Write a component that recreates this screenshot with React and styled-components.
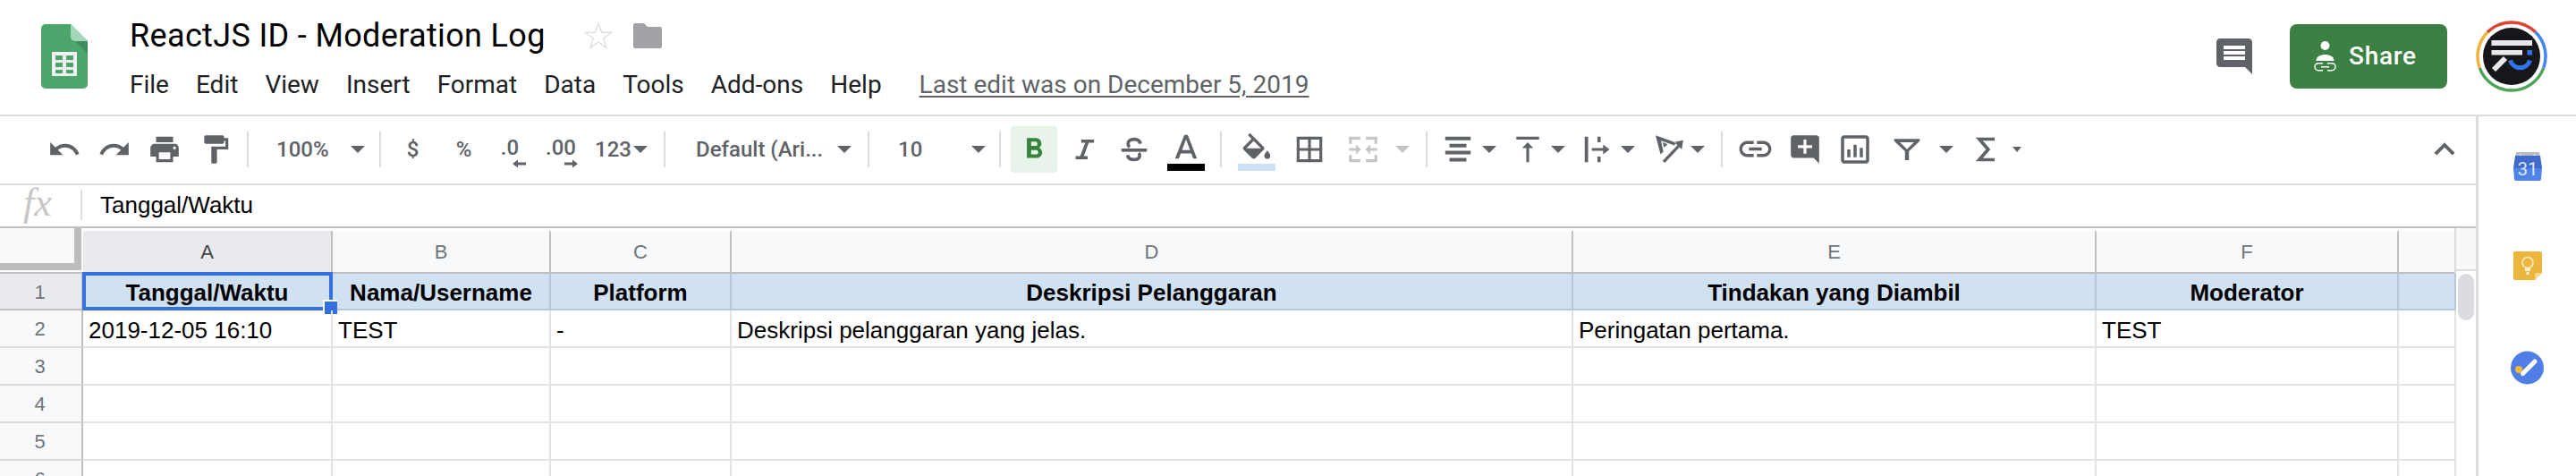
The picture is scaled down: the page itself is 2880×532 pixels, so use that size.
import React from "react";
import styled, { createGlobalStyle } from "styled-components";

const GlobalStyle = createGlobalStyle`
  html, body {
    margin: 0;
    padding: 0;
    background: #fff;
    overflow: hidden;
  }
  * {
    box-sizing: border-box;
  }
`;

const columns = [
  { letter: "A", width: 279, title: "Tanggal/Waktu", value: "2019-12-05 16:10", active: true },
  { letter: "B", width: 244, title: "Nama/Username", value: "TEST" },
  { letter: "C", width: 202, title: "Platform", value: "-" },
  { letter: "D", width: 941, title: "Deskripsi Pelanggaran", value: "Deskripsi pelanggaran yang jelas." },
  { letter: "E", width: 585, title: "Tindakan yang Diambil", value: "Peringatan pertama." },
  { letter: "F", width: 338, title: "Moderator", value: "TEST" },
  { letter: "", width: 64, title: "", value: "" },
];

const menus = ["File", "Edit", "View", "Insert", "Format", "Data", "Tools", "Add-ons", "Help"];

const Icon = ({ d, size = 38, color = "#5f6368", box = "0 0 24 24" }) => (
  <svg width={size} height={size} viewBox={box} fill={color} fillRule="evenodd">
    <path d={d} />
  </svg>
);

const icons = {
  undo: "M12.5 8c-2.65 0-5.05.99-6.9 2.6L2 7v9h9l-3.62-3.62c1.39-1.16 3.16-1.88 5.12-1.88 3.54 0 6.55 2.31 7.6 5.5l2.37-.78C21.08 11.03 17.15 8 12.5 8z",
  redo: "M18.4 10.6C16.55 8.99 14.15 8 11.5 8c-4.65 0-8.58 3.03-9.96 7.22L3.9 16c1.05-3.19 4.05-5.5 7.6-5.5 1.95 0 3.73.72 5.12 1.88L13 16h9V7l-3.6 3.6z",
  print: "M19 8H5c-1.66 0-3 1.34-3 3v6h4v4h12v-4h4v-6c0-1.66-1.34-3-3-3zm-3 11H8v-5h8v5zm3-7c-.55 0-1-.45-1-1s.45-1 1-1 1 .45 1 1-.45 1-1 1zm-1-9H6v4h12V3z",
  paint: "M18 4V3c0-.55-.45-1-1-1H5c-.55 0-1 .45-1 1v4c0 .55.45 1 1 1h12c.55 0 1-.45 1-1V6h1v4H9v11c0 .55.45 1 1 1h2c.55 0 1-.45 1-1v-9h8V4h-3z",
  bold: "M15.6 10.79c.97-.67 1.65-1.77 1.65-2.79 0-2.26-1.75-4-4-4H7v14h7.04c2.09 0 3.71-1.7 3.71-3.79 0-1.52-.86-2.82-2.15-3.42zM10 6.5h3c.83 0 1.5.67 1.5 1.5s-.67 1.5-1.5 1.5h-3v-3zm3.5 9H10v-3h3.5c.83 0 1.5.67 1.5 1.5s-.67 1.5-1.5 1.5z",
  italic: "M10 5v2.200h2.800L9.300 16.800H6V19h8.500v-2.200h-2.700l3.500-9.600H19V5z",
  textColor: "M11 3 5.5 17h2.25l1.12-3h6.25l1.12 3h2.25L13 3h-2zm-1.38 9L12 5.67 14.38 12H9.62z",
  fill: "M16.56 8.94L7.62 0 6.21 1.41l2.38 2.38-5.15 5.15c-.59.59-.59 1.54 0 2.12l5.5 5.5c.29.29.68.44 1.06.44s.77-.15 1.06-.44l5.5-5.5c.59-.58.59-1.53 0-2.12zM5.21 10L10 5.21 14.79 10H5.21zM19 11.5s-2 2.17-2 3.5c0 1.1.9 2 2 2s2-.9 2-2c0-1.33-2-3.5-2-3.5z",
  borders: "M3 3v18h18V3H3zm8 16H5v-6h6v6zm0-8H5V5h6v6zm8 8h-6v-6h6v6zm0-8h-6V5h6v6z",
  merge: "M2 3h8v2H4v3H2zM14 3h8v5h-2V5h-6zM2 16h2v3h6v2H2zM20 16h2v5h-8v-2h6zM2 11h5V8.5l3.5 3.5L7 15.5V13H2zM22 11h-5V8.5L13.5 12l3.5 3.5V13h5z",
  align: "M3 3h18v2.5H3zM6 8h12v2.5H6zM3 13h18v2.5H3zM6 18h12v2.5H6z",
  valign: "M8 11h3v10h2V11h3l-4-4-4 4zM4 3v2h16V3H4z",
  wrap: "M3 3h2.4v18H3zM12 3h2.2v4H12zM12 17h2.2v4H12zM8 11h8V8.5l4.5 3.5-4.5 3.5V13H8z",
  rotate: "M2.5 2 17 7.2l-1.2 2L6.3 5.8 8 13.5l-2 2zM7.5 7l3.5 1.3-2.6 2.4zM9 21.5l-1.6-1.5L18 9l-2.4-2.2L22 5.5 21 12l-1.6-1.6z",
  link: "M3.9 12c0-1.71 1.39-3.1 3.1-3.1h4V7H7c-2.76 0-5 2.24-5 5s2.24 5 5 5h4v-1.9H7c-1.71 0-3.1-1.39-3.1-3.1zM8 13h8v-2H8v2zm9-6h-4v1.9h4c1.71 0 3.1 1.39 3.1 3.1s-1.39 3.1-3.1 3.1h-4V17h4c2.76 0 5-2.24 5-5s-2.24-5-5-5z",
  addComment: "M22 4c0-1.1-.9-2-2-2H4c-1.1 0-2 .9-2 2v12c0 1.1.9 2 2 2h14l4 4V4zm-5 7h-4v4h-2v-4H7V9h4V5h2v4h4v2z",
  chart: "M9 17H7v-5h2v5zm4 0h-2V9h2v8zm4 0h-2v-6h2v6zm2 2H5V5h14v14zm0-16H5c-1.1 0-2 .9-2 2v14c0 1.1.9 2 2 2h14c1.1 0 2-.9 2-2V5c0-1.1-.9-2-2-2z",
  filter: "M3 4.5h18v1.6l-7.6 7.2v6.2h-2.8v-6.2L3 6.1zM7 7l5 4.8L17 7z",
  chevron: "M7.41 15.41L12 10.83l4.59 4.58L18 14l-6-6-6 6z",
  comment: "M21.99 4c0-1.1-.89-2-1.99-2H4c-1.1 0-2 .9-2 2v12c0 1.1.9 2 2 2h14l4 4-.01-18zM18 14H6v-2h12v2zm0-3H6V9h12v2zm0-3H6V6h12v2z",
};

const SheetsLogo = () => (
  <svg width="52" height="72" viewBox="0 0 52 72">
    <path d="M5 0h28l19 19v48a5 5 0 0 1-5 5H5a5 5 0 0 1-5-5V5a5 5 0 0 1 5-5z" fill="#4ca56a" />
    <path d="M38 19l14 14V19z" fill="#3f8b60" />
    <path d="M33 0l19 19H38a5 5 0 0 1-5-5z" fill="#a6d6b8" />
    <path d="M12 31h28v27H12zM16 35v5h8v-5zM28 35v5h8v-5zM16 43v5h8v-5zM28 43v5h8v-5zM16 51v4h8v-4zM28 51v4h8v-4z" fill="#f1f1f1" fillRule="evenodd" />
  </svg>
);

const StarIcon = () => (
  <svg width="32" height="32" viewBox="0 0 32 32">
    <path d="M16 2l3.6 10.4h10.9l-8.8 6.5 3.3 10.6L16 23l-9 6.5 3.3-10.6-8.8-6.5h10.9z" fill="none" stroke="#dadce0" strokeWidth="1.2" />
  </svg>
);

const FolderIcon = () => (
  <svg width="32" height="28" viewBox="0 0 32 28">
    <path d="M2 0h10l4 4h14a2 2 0 0 1 2 2v20a2 2 0 0 1-2 2H2a2 2 0 0 1-2-2V2a2 2 0 0 1 2-2z" fill="#a0a2a6" />
  </svg>
);

const ShareIcon = () => (
  <svg width="25" height="34" viewBox="0 0 25 34">
    <circle cx="12.5" cy="5" r="5" fill="#fff" />
    <path d="M2.5 22c0-5 5-7 10-7s10 2 10 7z" fill="#fff" />
    <path d="M10 24.7H5a4 4 0 0 0 0 8h5M15 24.7h5a4 4 0 0 1 0 8h-5M8 28.7h9" fill="none" stroke="#fff" strokeWidth="1.5" />
  </svg>
);

const AvatarLogo = () => (
  <svg width="80" height="80" viewBox="0 0 80 80">
    <g fill="none" strokeWidth="3.5">
      <path d="M13.1 13.1a38 38 0 0 1 53.8 0" stroke="#db4437" />
      <path d="M66.9 13.1a38 38 0 0 1 8.8 39.9" stroke="#4285f4" />
      <path d="M75.7 53a38 38 0 0 1-71.4 0" stroke="#4fa355" />
      <path d="M4.3 53a38 38 0 0 1 8.8-39.9" stroke="#f2b33d" />
    </g>
    <circle cx="40" cy="40" r="32" fill="#16171b" />
    <path d="M17.5 22h45.5v6H17.5zM17.5 33h34.5v5.5H17.5z" fill="#e8e8e8" />
    <path d="M57.5 33H63v5.5h-5.500z" fill="#2f74ea" />
    <path d="M33 42L20 55" stroke="#e8e8e8" strokeWidth="6" />
    <path d="M38.500 44.500a11.500 11.500 0 0 0 22 0" fill="none" stroke="#2f74ea" strokeWidth="5" />
  </svg>
);

const SigmaIcon = () => (
  <svg width="40" height="40" viewBox="0 0 24 24" fill="none" stroke="#5f6368" strokeWidth="2.200">
    <path d="M18 5.100H7.700l6 6.900-6 6.900H18" />
  </svg>
);

const CalendarIcon = () => (
  <svg width="32" height="32" viewBox="0 0 32 32">
    <path d="M3 0h26l1 6H2z" fill="#b9bcc2" />
    <circle cx="8" cy="3" r="1" fill="#e8e8e8" />
    <circle cx="24" cy="3" r="1" fill="#e8e8e8" />
    <path d="M2 4h28l2 14H0z" fill="#3f6bcc" />
    <path d="M0 18h32l-1 12a2 2 0 0 1-2 2H3a2 2 0 0 1-2-2z" fill="#4f83e8" />
    <text x="16" y="26" textAnchor="middle" fontFamily="Roboto, sans-serif" fontSize="20" fill="#dfe6f6">31</text>
  </svg>
);

const KeepIcon = () => (
  <svg width="32" height="32" viewBox="0 0 32 32">
    <path d="M2 0h28a2 2 0 0 1 2 2v22l-8 8H2a2 2 0 0 1-2-2V2a2 2 0 0 1 2-2z" fill="#ecb53e" />
    <path d="M24 32v-6a2 2 0 0 1 2-2h6z" fill="#f6d88a" />
    <circle cx="16" cy="12.500" r="6" fill="none" stroke="#fbefcf" strokeWidth="1.6" />
    <path d="M13 18h6v4h-6zM14.500 23h3v3h-3z" fill="#fbefcf" />
  </svg>
);

const TasksIcon = () => (
  <svg width="37" height="38" viewBox="0 0 37 38">
    <circle cx="18.500" cy="19" r="18.500" fill="#4f7fe6" />
    <path d="M13.500 25.500L27 12" stroke="#fff" strokeWidth="5" strokeLinecap="round" />
    <circle cx="9" cy="21" r="4" fill="#f2b93b" />
  </svg>
);

function App() {
  return (
    <>
      <GlobalStyle />
      <Page>
        <Header>
          <SheetsLogo />
          <TitleBlock>
            <TitleRow>
              <Title>ReactJS ID - Moderation Log</Title>
              <StarSlot><StarIcon /></StarSlot>
              <FolderSlot><FolderIcon /></FolderSlot>
            </TitleRow>
            <MenuRow>
              {menus.map((menu) => (
                <MenuItem key={menu}>{menu}</MenuItem>
              ))}
              <LastEdit>Last edit was on December 5, 2019</LastEdit>
            </MenuRow>
          </TitleBlock>
          <HeaderActions>
            <Icon d={icons.comment} size={48} />
            <ShareButton>
              <ShareIcon />
              Share
            </ShareButton>
            <AvatarSlot><AvatarLogo /></AvatarSlot>
          </HeaderActions>
        </Header>

        <Workspace>
          <Editor>
            <Toolbar>
              <Tool $w={57}><Icon d={icons.undo} /></Tool>
              <Tool $w={56}><Icon d={icons.redo} /></Tool>
              <Tool $w={56}><Icon d={icons.print} /></Tool>
              <Tool $w={58}><Icon d={icons.paint} /></Tool>
              <Divider $ml={6} />
              <Select $w={146} $pl={31} $pr={16}>100%<Caret /></Select>
              <Divider />
              <Tool $w={71}><ToolText>$</ToolText></Tool>
              <Tool $w={43}><ToolText>%</ToolText></Tool>
              <Tool $w={60}>
                <DecimalStack>
                  <ToolText>.0</ToolText>
                  <ArrowMark $left>
                    <Icon d="M7 1L1 5.500 7 10V7h9V4H7z" size={16} box="0 0 16 11" />
                  </ArrowMark>
                </DecimalStack>
              </Tool>
              <Tool $w={54}>
                <DecimalStack>
                  <ToolText>.00</ToolText>
                  <ArrowMark>
                    <Icon d="M9 1l6 4.500L9 10V7H0V4h9z" size={16} box="0 0 16 11" />
                  </ArrowMark>
                </DecimalStack>
              </Tool>
              <Select $w={88} $pl={11} $pr={18}>123<Caret /></Select>
              <Divider />
              <Select $w={226} $pl={34} $pr={18}>Default (Ari...<Caret /></Select>
              <Divider />
              <Select $w={145} $pl={32} $pr={15}>10<Caret /></Select>
              <Divider />
              <Tool $w={52} $ml={11} $active><Icon d={icons.bold} color="#38843f" /></Tool>
              <Tool $w={60}><Icon d={icons.italic} /></Tool>
              <Tool $w={52}>
                <svg width="38" height="38" viewBox="0 0 24 24" fill="none" stroke="#5f6368" strokeWidth="2.300">
                  <path d="M16.500 8C16 5.800 14.300 4.800 12 4.800c-2.600 0-4.300 1.200-4.300 3.200 0 1 .4 1.700 1.100 2.300" />
                  <path d="M15.300 14.500c.4.500.6 1 .6 1.700 0 1.900-1.700 3-4 3-2.400 0-4.200-1-4.600-3.200" />
                  <path d="M3 12.500h18" />
                </svg>
              </Tool>
              <Tool $w={64}>
                <ColorStack>
                  <Icon d={icons.textColor} size={34} box="3 1 18 18" />
                  <ColorBar $color="#000" />
                </ColorStack>
              </Tool>
              <Divider $ml={6} />
              <Tool $w={70} $ml={4}>
                <ColorStack>
                  <Icon d={icons.fill} size={34} box="2 -1 20 20" />
                  <ColorBar $color="#cfe2f3" />
                </ColorStack>
              </Tool>
              <Tool $w={48}><Icon d={icons.borders} /></Tool>
              <Tool $w={72}><Icon d={icons.merge} color="#c4c5c7" /></Tool>
              <Caret $muted />
              <Divider $ml={18} />
              <Tool $w={54} $ml={7}><Icon d={icons.align} /></Tool>
              <Caret />
              <Tool $w={52} $ml={9}><Icon d={icons.valign} /></Tool>
              <Caret />
              <Tool $w={52} $ml={10}><Icon d={icons.wrap} /></Tool>
              <Caret />
              <Tool $w={40} $ml={18}><Icon d={icons.rotate} /></Tool>
              <Caret $ml={4} />
              <Divider $ml={18} />
              <Tool $w={72}><Icon d={icons.link} size={43} /></Tool>
              <Tool $w={40}><Icon d={icons.addComment} /></Tool>
              <Tool $w={71}><Icon d={icons.chart} size={42} /></Tool>
              <Tool $w={46}><Icon d={icons.filter} /></Tool>
              <Caret $ml={13} />
              <Tool $w={60} $ml={6}><SigmaIcon /></Tool>
              <Caret $small $ml={0} />
              <CollapseSlot><Icon d={icons.chevron} size={46} /></CollapseSlot>
            </Toolbar>

            <FormulaBar>
              <FxLabel>fx</FxLabel>
              <FormulaText>Tanggal/Waktu</FormulaText>
            </FormulaBar>

            <Sheet>
              <Grid>
                <ColumnHeaderRow>
                  <CornerCell>
                    <CornerBox />
                  </CornerCell>
                  {columns.map((col) => (
                    <ColumnHeader key={col.width} $w={col.width} $active={col.active}>
                      {col.letter}
                    </ColumnHeader>
                  ))}
                </ColumnHeaderRow>

                <Row $head>
                  <RowHeader $active $head>1</RowHeader>
                  {columns.map((col) => (
                    <HeadCell key={col.width} $w={col.width}>{col.title}</HeadCell>
                  ))}
                  <SelectionBox>
                    <FillHandle />
                  </SelectionBox>
                </Row>

                <Row>
                  <RowHeader>2</RowHeader>
                  {columns.map((col) => (
                    <Cell key={col.width} $w={col.width}>{col.value}</Cell>
                  ))}
                </Row>

                {[3, 4, 5, 6].map((num) => (
                  <Row key={num}>
                    <RowHeader>{num}</RowHeader>
                    {columns.map((col) => (
                      <Cell key={col.width} $w={col.width} />
                    ))}
                  </Row>
                ))}
              </Grid>
              <ScrollRail>
                <ScrollCap />
                <ScrollThumb />
              </ScrollRail>
            </Sheet>
          </Editor>

          <SidePanel>
            <CalendarIcon />
            <KeepIcon />
            <TasksIcon />
          </SidePanel>
        </Workspace>
      </Page>
    </>
  );
}

const Page = styled.div`
  width: 2880px;
  height: 532px;
  overflow: hidden;
  background: #fff;
  color: #000;
`;

const Header = styled.header`
  display: flex;
  align-items: center;
  height: 130px;
  padding: 0 32px 2px 46px;
  border-bottom: 2px solid #dadce0;
`;

const TitleBlock = styled.div`
  align-self: flex-start;
  margin: 18px 0 0 47px;
`;

const TitleRow = styled.div`
  display: flex;
  align-items: center;
  height: 44px;
`;

const Title = styled.div`
  font: 400 36px/44px Roboto, sans-serif;
  letter-spacing: 0.35px;
  color: #000;
`;

const StarSlot = styled.div`
  display: flex;
  margin-left: 43px;
`;

const FolderSlot = styled.div`
  display: flex;
  margin-left: 23px;
`;

const MenuRow = styled.nav`
  display: flex;
  align-items: center;
  gap: 30px;
  margin-top: 15px;
  height: 36px;
`;

const MenuItem = styled.span`
  font: 400 28px/36px Roboto, sans-serif;
  color: #202124;
`;

const LastEdit = styled.span`
  font: 400 28px/36px Roboto, sans-serif;
  color: #5f6368;
  text-decoration: underline;
  text-underline-offset: 3px;
  margin-left: 12px;
`;

const HeaderActions = styled.div`
  display: flex;
  align-items: center;
  margin-left: auto;
`;

const ShareButton = styled.button`
  display: flex;
  align-items: center;
  gap: 14px;
  width: 176px;
  height: 72px;
  margin-left: 38px;
  padding: 0 0 0 27px;
  border: 0;
  border-radius: 8px;
  background: #3d8043;
  color: #fff;
  font: 500 28px/1 Roboto, sans-serif;
  letter-spacing: 0.7px;
`;

const AvatarSlot = styled.div`
  display: flex;
  margin-left: 32px;
`;

const Workspace = styled.div`
  display: flex;
  height: 402px;
`;

const Editor = styled.div`
  width: 2771px;
  border-right: 3px solid #dadce0;
  display: flex;
  flex-direction: column;
`;

const Toolbar = styled.div`
  display: flex;
  align-items: center;
  height: 77px;
  padding: 0 12px 2px 43px;
  border-bottom: 2px solid #dadce0;
`;

const Tool = styled.div`
  display: flex;
  align-items: center;
  justify-content: center;
  flex: none;
  width: ${(p) => p.$w}px;
  height: 52px;
  margin-left: ${(p) => p.$ml || 0}px;
  border-radius: 4px;
  background: ${(p) => (p.$active ? "#e8f3ea" : "transparent")};
`;

const ToolText = styled.span`
  font: 500 24px/24px Roboto, sans-serif;
  color: #5f6368;
`;

const Divider = styled.div`
  flex: none;
  width: 2px;
  height: 40px;
  margin-left: ${(p) => p.$ml || 0}px;
  background: #dadce0;
`;

const Caret = styled.div`
  flex: none;
  width: 0;
  height: 0;
  margin-left: ${(p) => p.$ml || 0}px;
  border-left: ${(p) => (p.$small ? 5 : 8)}px solid transparent;
  border-right: ${(p) => (p.$small ? 5 : 8)}px solid transparent;
  border-top: ${(p) => (p.$small ? 6 : 8)}px solid ${(p) => (p.$muted ? "#c4c5c7" : "#5f6368")};
`;

const Select = styled.div`
  display: flex;
  align-items: center;
  justify-content: space-between;
  flex: none;
  width: ${(p) => p.$w}px;
  padding: 0 ${(p) => p.$pr}px 0 ${(p) => p.$pl}px;
  font: 500 24px/24px Roboto, sans-serif;
  color: #5f6368;
`;

const DecimalStack = styled.div`
  display: flex;
  flex-direction: column;
  margin-top: 6px;
`;

const ArrowMark = styled.div`
  display: flex;
  height: 12px;
  margin-top: -2px;
  justify-content: flex-end;
  margin-right: ${(p) => (p.$left ? "-8px" : "-3px")};
`;

const ColorStack = styled.div`
  display: flex;
  flex-direction: column;
  align-items: center;
  gap: 2px;
  margin-top: 4px;
`;

const ColorBar = styled.div`
  width: 42px;
  height: 8px;
  background: ${(p) => p.$color};
`;

const CollapseSlot = styled.div`
  display: flex;
  margin-left: auto;
`;

const FormulaBar = styled.div`
  display: flex;
  align-items: center;
  height: 48px;
  padding-bottom: 2px;
  border-bottom: 2px solid #c0c0c0;
`;

const FxLabel = styled.div`
  width: 92px;
  height: 34px;
  padding: 0 0 0 26px;
  border-right: 2px solid #dadce0;
  font: italic 400 44px/30px "Liberation Serif", serif;
  color: #c6c6c6;
`;

const FormulaText = styled.div`
  margin-left: 20px;
  font: 400 26px/34px "Liberation Sans", Arial, sans-serif;
  color: #000;
`;

const Sheet = styled.div`
  display: flex;
  flex: 1;
  min-height: 0;
  overflow: hidden;
`;

const Grid = styled.div`
  width: 2746px;
  flex: none;
`;

const ColumnHeaderRow = styled.div`
  display: flex;
  height: 51px;
  padding-top: 3px;
  border-bottom: 2px solid #c0c0c0;
`;

const CornerCell = styled.div`
  flex: none;
  width: 93px;
  margin-top: -3px;
  padding-right: 2px;
`;

const CornerBox = styled.div`
  height: 47px;
  background: #f8f9fa;
  border-right: 8px solid #bdbdbd;
  border-bottom: 8px solid #bdbdbd;
`;

const ColumnHeader = styled.div`
  display: flex;
  align-items: center;
  justify-content: center;
  flex: none;
  width: ${(p) => p.$w}px;
  padding-top: 2px;
  background: ${(p) => (p.$active ? "#e8eaed" : "#f8f9fa")};
  border-right: 2px solid #c0c0c0;
  font: 400 22px/1 "Liberation Sans", Arial, sans-serif;
  color: ${(p) => (p.$active ? "#444" : "#70757a")};
`;

const Row = styled.div`
  position: relative;
  display: flex;
  height: ${(p) => (p.$head ? 41 : 42)}px;
`;

const RowHeader = styled.div`
  display: flex;
  align-items: center;
  justify-content: center;
  flex: none;
  width: 93px;
  padding: 2px 2px 0 0;
  background: ${(p) => (p.$active ? "#e8eaed" : "#f8f9fa")};
  border-right: 2px solid #c0c0c0;
  border-bottom: 2px solid ${(p) => (p.$head ? "#c0c0c0" : "#dadada")};
  font: 400 22px/1 "Liberation Sans", Arial, sans-serif;
  color: #70757a;
`;

const HeadCell = styled.div`
  display: flex;
  align-items: center;
  justify-content: center;
  flex: none;
  width: ${(p) => p.$w}px;
  padding-top: 2px;
  background: #d0e1f1;
  border-right: 2px solid #b5c7d8;
  border-bottom: 2px solid #b5c7d8;
  font: 700 26px/1 "Liberation Sans", Arial, sans-serif;
  color: #000;
`;

const Cell = styled.div`
  display: flex;
  align-items: center;
  flex: none;
  width: ${(p) => p.$w}px;
  padding: 3px 0 0 6px;
  border-right: 2px solid #e2e3e3;
  border-bottom: 2px solid #e2e3e3;
  font: 400 26px/1 "Liberation Sans", Arial, sans-serif;
  color: #000;
  white-space: nowrap;
`;

const SelectionBox = styled.div`
  position: absolute;
  left: 92px;
  top: -2px;
  width: 280px;
  height: 43px;
  border: 4px solid #3570e0;
`;

const FillHandle = styled.div`
  position: absolute;
  right: -9px;
  bottom: -8px;
  width: 16px;
  height: 16px;
  background: #3570e0;
  border-left: 2px solid #fff;
  border-top: 2px solid #fff;
`;

const ScrollRail = styled.div`
  flex: 1;
  border-left: 2px solid #dadce0;
  margin-left: -2px;
`;

const ScrollCap = styled.div`
  height: 48px;
  background: #f8f8f8;
  border-bottom: 2px solid #dadce0;
`;

const ScrollThumb = styled.div`
  width: 18px;
  height: 52px;
  margin: 3px 0 0 2px;
  border-radius: 9px;
  background: #dadce0;
`;

const SidePanel = styled.aside`
  flex: 1;
  display: flex;
  flex-direction: column;
  align-items: center;
  gap: 79px;
  padding-top: 40px;
`;

export default App;
